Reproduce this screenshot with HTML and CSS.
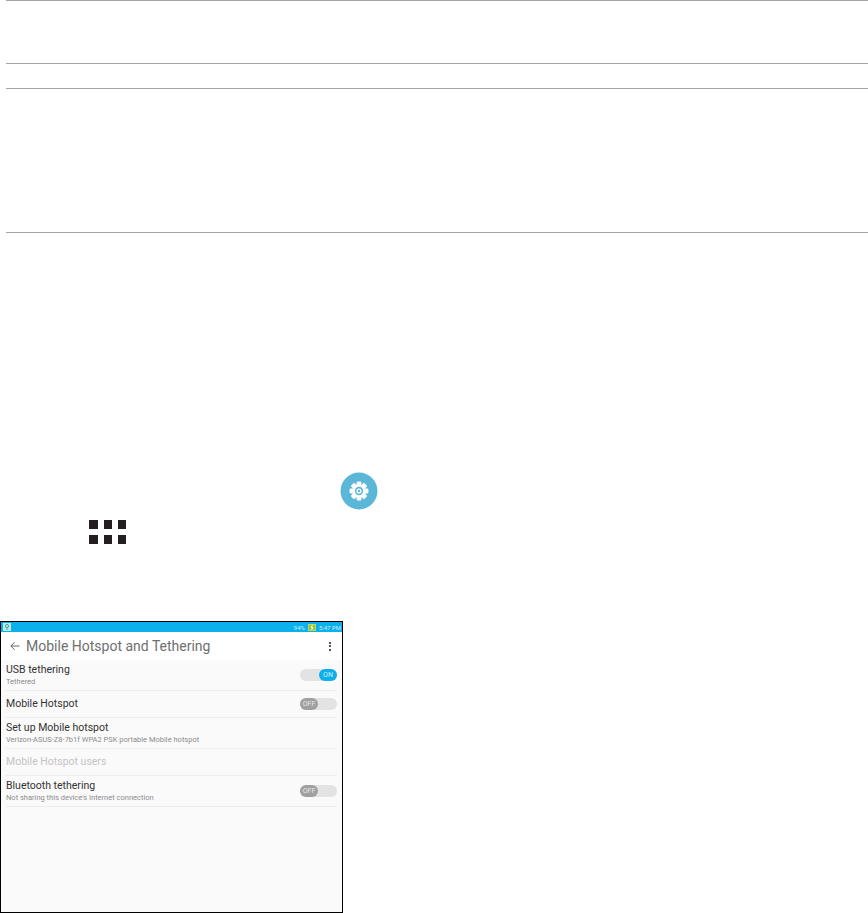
FILE: index.html
```html
<!DOCTYPE html>
<html lang="en">

<head>
    <meta charset="UTF-8">
    <title>Mobile Hotspot and Tethering</title>
    <link rel="stylesheet" href="styles.css">
</head>

<body>
<div class="table">
    <div class="rule row-a"></div>
    <div class="rule row-b"></div>
    <div class="rule row-c"></div>
    <div class="rule"></div>
</div>

<div class="gear-line">
    <svg class="gear" width="38" height="38" viewBox="0 0 38 38">
        <circle cx="19" cy="19" r="18.5" fill="#5ab7d7"/>
        <g fill="#fff">
            <rect x="16.6" y="9.6" width="4.8" height="18.8" rx="1"/>
            <rect x="16.6" y="9.6" width="4.8" height="18.8" rx="1" transform="rotate(45 19 19)"/>
            <rect x="16.6" y="9.6" width="4.8" height="18.8" rx="1" transform="rotate(90 19 19)"/>
            <rect x="16.6" y="9.6" width="4.8" height="18.8" rx="1" transform="rotate(135 19 19)"/>
        </g>
        <circle cx="19" cy="19" r="6.6" fill="#fff"/>
        <circle cx="19" cy="19" r="4.2" fill="#5ab7d7"/>
        <circle cx="19" cy="19" r="2.6" fill="#fff"/>
        <circle cx="19" cy="19" r="1.2" fill="#5ab7d7"/>
    </svg>
</div>

<div class="apps">
    <span></span><span></span><span></span>
    <span></span><span></span><span></span>
</div>

<div class="phone">
    <div class="status">
        <svg class="usb" width="8" height="8" viewBox="0 0 8 8">
            <rect width="8" height="8" fill="#bfe8e4"/>
            <circle cx="4" cy="3" r="1.6" fill="none" stroke="#3fa9a8"/>
            <path d="M4 4.5V7" stroke="#3fa9a8"/>
        </svg>
        <span class="status-right">94%
            <svg class="battery" width="8" height="7" viewBox="0 0 8 7">
                <rect x="0.5" y="0.5" width="7" height="6" fill="#8fc63f" stroke="#c4d94a"/>
                <path d="M4.5 1L3 3.6H5L3.5 6" stroke="#fff" fill="none"/>
            </svg>
            5:47 PM</span>
    </div>
    <div class="toolbar">
        <svg class="back" width="10" height="10" viewBox="0 0 10 10">
            <path d="M9.5 5H1M4.6 1.2L0.9 5L4.6 8.8" fill="none" stroke="#666" stroke-width="1"/>
        </svg>
        <span class="title">Mobile Hotspot and Tethering</span>
        <span class="more"><i></i><i></i><i></i></span>
    </div>
    <div class="list">
        <div class="item tall">
            <div class="text">
                <div class="name">USB tethering</div>
                <div class="sub">Tethered</div>
            </div>
            <div class="toggle on"><b>ON</b></div>
        </div>
        <div class="item short">
            <div class="text">
                <div class="name">Mobile Hotspot</div>
            </div>
            <div class="toggle"><b>OFF</b></div>
        </div>
        <div class="item tall">
            <div class="text">
                <div class="name">Set up Mobile hotspot</div>
                <div class="sub">Verizon-ASUS-Z8-7b1f WPA2 PSK portable Mobile hotspot</div>
            </div>
        </div>
        <div class="item short">
            <div class="text">
                <div class="name off">Mobile Hotspot users</div>
            </div>
        </div>
        <div class="item tall">
            <div class="text">
                <div class="name">Bluetooth tethering</div>
                <div class="sub">Not sharing this device's Internet connection</div>
            </div>
            <div class="toggle"><b>OFF</b></div>
        </div>
    </div>
</div>
</body>

</html>
```

FILE: styles.css
```css
html, body {
    margin: 0;
    padding: 0;
    background: #fff;
}

body {
    width: 868px;
    height: 913px;
    overflow: hidden;
    font-family: "Roboto", "Liberation Sans", sans-serif;
}

.table {
    margin-left: 6px;
}

.rule {
    height: 1px;
    background: #a6a6a6;
}

.row-a {
    margin-bottom: 62px;
}

.row-b {
    margin-bottom: 24px;
}

.row-c {
    margin-bottom: 143px;
}

.gear-line {
    margin-top: 239px;
    padding-left: 340px;
    height: 38px;
}

.gear {
    display: block;
}

.apps {
    margin: 10px 0 0 89px;
    display: grid;
    grid-template-columns: 9px 8px 8px;
    grid-auto-rows: 9px;
    column-gap: 6px;
    row-gap: 6px;
    width: 36px;
}

.apps span {
    background: #231f20;
}

.phone {
    margin-top: 77px;
    width: 341px;
    height: 290px;
    border: 1px solid #000;
    background: #fafafa;
}

.status {
    height: 10px;
    padding: 0 1px 0 2px;
    background: #0cb0ea;
    display: flex;
    align-items: center;
    justify-content: space-between;
    font-size: 6px;
    color: #cdeef9;
}

.usb {
    display: block;
}

.status-right {
    display: flex;
    align-items: center;
    gap: 3px;
}

.toolbar {
    height: 28px;
    background: #fff;
    display: flex;
    align-items: center;
    padding: 0 9px;
}

.back {
    margin-right: 6px;
}

.title {
    font-size: 14px;
    color: #6f6f6f;
}

.more {
    margin-left: auto;
    margin-right: 2px;
    display: flex;
    flex-direction: column;
    gap: 1.5px;
}

.more i {
    display: block;
    width: 2px;
    height: 2px;
    background: #555;
}

.list {
    padding: 0 5px;
}

.item {
    display: flex;
    align-items: center;
    justify-content: space-between;
    border-bottom: 1px solid #ededed;
}

.tall {
    height: 30px;
}

.short {
    height: 26px;
}

.name {
    font-size: 10.5px;
    line-height: 12px;
    color: #333;
}

.name.off {
    color: #c4c4c4;
}

.sub {
    margin-top: 1px;
    font-size: 7.5px;
    line-height: 9px;
    color: #8c8c8c;
}

.toggle {
    width: 37px;
    height: 12px;
    border-radius: 6px;
    background: #e3e3e3;
    display: flex;
}

.toggle b {
    width: 18px;
    height: 12px;
    border-radius: 6px;
    background: #a0a0a0;
    color: #e8e8e8;
    font-size: 7px;
    font-weight: 400;
    line-height: 12px;
    text-align: center;
}

.toggle.on {
    justify-content: flex-end;
}

.toggle.on b {
    background: #0cb0ea;
    color: #d5f1fb;
}
```
